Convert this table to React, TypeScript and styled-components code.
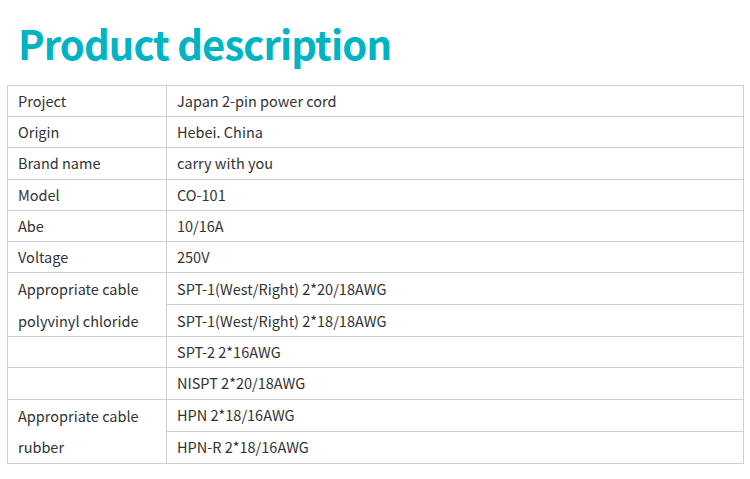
import React from "react";
import styled, { createGlobalStyle } from "styled-components";

const Global = createGlobalStyle`
  html, body { margin: 0; padding: 0; background: #fff; }
  body { font-family: "Noto Sans CJK SC", "Noto Sans", sans-serif; }
`;

const Page = styled.div`
  width: 750px;
  height: 479px;
  padding: 16px 6px 0 7px;
  box-sizing: border-box;
`;

const Title = styled.h1`
  margin: 0 0 15px 11px;
  font-family: "Noto Sans CJK SC", "Noto Sans", sans-serif;
  font-weight: 700;
  font-size: 40px;
  line-height: 54px;
  color: #00b4c4;
  letter-spacing: -0.9px;
`;

const Table = styled.table`
  width: 737px;
  border-collapse: collapse;
  table-layout: fixed;
  border: 1px solid #cfcfcf;
`;

const Cell = styled.td`
  height: 31.2px;
  padding: 0 10px;
  border: 1px solid #cfcfcf;
  font-size: 14.5px;
  line-height: 20px;
  color: #333;
  vertical-align: middle;
  white-space: nowrap;
  box-sizing: border-box;
`;

const MergedCell = styled(Cell)`
  line-height: 31.5px;
  vertical-align: top;
  white-space: normal;
`;

type Row = { label?: string; value: string; span?: number; skip?: boolean };

const rows: Row[] = [
  { label: "Project", value: "Japan 2-pin power cord" },
  { label: "Origin", value: "Hebei. China" },
  { label: "Brand name", value: "carry with you" },
  { label: "Model", value: "CO-101" },
  { label: "Abe", value: "10/16A" },
  { label: "Voltage", value: "250V" },
  { label: "Appropriate cable polyvinyl chloride", value: "SPT-1(West/Right) 2*20/18AWG", span: 2 },
  { value: "SPT-1(West/Right) 2*18/18AWG", skip: true },
  { label: "", value: "SPT-2 2*16AWG" },
  { label: "", value: "NISPT 2*20/18AWG" },
  { label: "Appropriate cable rubber", value: "HPN 2*18/16AWG", span: 2 },
  { value: "HPN-R 2*18/16AWG", skip: true },
];

export default function App() {
  return (
    <>
      <Global />
      <Page>
        <Title>Product description</Title>
        <Table>
          <colgroup>
            <col style={{ width: 159 }} />
            <col />
          </colgroup>
          <tbody>
            {rows.map((r, i) => (
              <tr key={i}>
                {r.skip ? null : r.span ? (
                  <MergedCell rowSpan={r.span}>{r.label}</MergedCell>
                ) : (
                  <Cell>{r.label}</Cell>
                )}
                <Cell>{r.value}</Cell>
              </tr>
            ))}
          </tbody>
        </Table>
      </Page>
    </>
  );
}
